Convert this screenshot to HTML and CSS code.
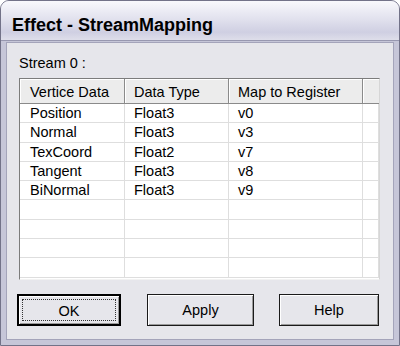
FILE: index.html
```html
<!DOCTYPE html>
<html lang="en">
<head>
    <meta charset="UTF-8">
    <title>Effect - StreamMapping</title>
    <link rel="stylesheet" href="styles.css">
</head>
<body>
    <div class="window">
        <div class="titlebar">Effect - StreamMapping</div>
        <div class="client">
            <div class="label">Stream 0 :</div>

            <div class="list">
                <div class="list-head">
                    <div class="hcell">Vertice Data</div>
                    <div class="hcell">Data Type</div>
                    <div class="hcell">Map to Register</div>
                    <div class="hcell"></div>
                </div>
                <div class="list-body">
                    <div class="row"><div class="cell">Position</div><div class="cell">Float3</div><div class="cell">v0</div><div class="cell"></div></div>
                    <div class="row"><div class="cell">Normal</div><div class="cell">Float3</div><div class="cell">v3</div><div class="cell"></div></div>
                    <div class="row"><div class="cell">TexCoord</div><div class="cell">Float2</div><div class="cell">v7</div><div class="cell"></div></div>
                    <div class="row"><div class="cell">Tangent</div><div class="cell">Float3</div><div class="cell">v8</div><div class="cell"></div></div>
                    <div class="row"><div class="cell">BiNormal</div><div class="cell">Float3</div><div class="cell">v9</div><div class="cell"></div></div>
                    <div class="row"><div class="cell"></div><div class="cell"></div><div class="cell"></div><div class="cell"></div></div>
                    <div class="row"><div class="cell"></div><div class="cell"></div><div class="cell"></div><div class="cell"></div></div>
                    <div class="row"><div class="cell"></div><div class="cell"></div><div class="cell"></div><div class="cell"></div></div>
                    <div class="row"><div class="cell"></div><div class="cell"></div><div class="cell"></div><div class="cell"></div></div>
                </div>
            </div>

            <div class="buttons">
                <button class="btn btn-ok"><span class="focus">OK</span></button>
                <button class="btn btn-apply">Apply</button>
                <button class="btn btn-help">Help</button>
            </div>
        </div>
    </div>
</body>
</html>
```

FILE: styles.css
```css
body { margin: 0; font-family: "Liberation Sans", Arial, sans-serif; font-size: 14.5px; color: #000; background: #fff; }

.window { width: 400px; height: 346px; box-sizing: border-box; display: flex; flex-direction: column; border: 1px solid #727288; border-radius: 9px 9px 0 0; background: #c6c6d8; overflow: hidden; }

.titlebar { height: 40px; box-sizing: border-box; padding: 14px 0 0 11px; line-height: 20px; font-size: 18px; font-weight: bold; border-bottom: 1px solid #9898b0; background: linear-gradient(#f8f8fc, #e2e2ee 45%, #cfcfe2 80%, #dedeea); }

.client { flex: 1; margin: 1px 5px 5px; border: 1px solid #a4a4ba; background: #e6e6eb; padding: 12px 13px 0 12px; }

.label { line-height: 16px; margin-bottom: 7px; }

.list { height: 202px; box-sizing: border-box; border: 1px solid; border-color: #7c7c7c #d6d6d6 #f2f2f2 #7c7c7c; background: #fff; overflow: hidden; }

.list-head, .row { display: grid; grid-template-columns: 105px 104px 134px 1fr; }

.list-head { height: 25px; box-sizing: border-box; border-bottom: 1px solid #8a8a8a; background: #ececec; }
.hcell { box-sizing: border-box; padding: 3px 0 0 9px; line-height: 21px; border-right: 1px solid #8a8a8a; box-shadow: inset 1px 1px 0 #fff; white-space: nowrap; }
.hcell:first-child { padding-left: 10px; }
.hcell:last-child { border-right: none; }

.row { height: 19.3px; box-sizing: border-box; border-bottom: 1px solid #dedede; }
.cell { box-sizing: border-box; padding-left: 9px; line-height: 18.3px; border-right: 1px solid #dedede; white-space: nowrap; }
.cell:first-child { padding-left: 10px; }

.buttons { display: flex; margin: 14px 0 0 -2px; }
.btn { height: 32px; box-sizing: border-box; font-family: inherit; font-size: 14.5px; background: #e6e6eb; border: 1px solid #1a1a1a; box-shadow: inset 1px 1px 0 #fff, inset -1px -1px 0 #9a9a9a; padding: 0; color: #000; }
.btn-ok { width: 104px; border: 2px solid #000; padding: 3px; }
.btn-apply { width: 107px; margin-left: 26px; }
.btn-help { width: 100px; margin-left: 25px; }
.focus { display: block; height: 100%; box-sizing: border-box; border: 1px dotted #333; line-height: 22px; }
```
